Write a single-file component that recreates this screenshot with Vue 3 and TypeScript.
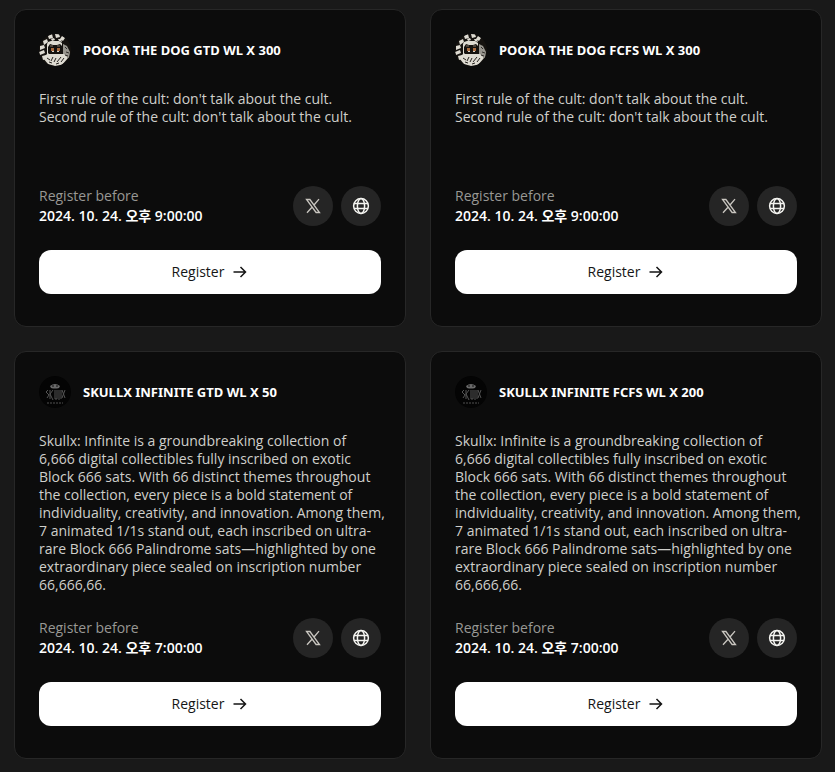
<script setup lang="ts">
interface Drop {
  title: string
  art: 'pooka' | 'skullx'
  description: string
  deadline: string
}

const pookaText =
  "First rule of the cult: don't talk about the cult.\nSecond rule of the cult: don't talk about the cult."
const skullxText = [
  'Skullx: Infinite is a groundbreaking collection of',
  '6,666 digital collectibles fully inscribed on exotic',
  'Block 666 sats. With 66 distinct themes throughout',
  'the collection, every piece is a bold statement of',
  'individuality, creativity, and innovation. Among them,',
  '7 animated 1/1s stand out, each inscribed on ultra-',
  'rare Block 666 Palindrome sats—highlighted by one',
  'extraordinary piece sealed on inscription number',
  '66,666,66.',
].join('\n')

const drops: Drop[] = [
  { title: 'POOKA THE DOG GTD WL X 300', art: 'pooka', description: pookaText, deadline: '2024. 10. 24. 오후 9:00:00' },
  { title: 'POOKA THE DOG FCFS WL X 300', art: 'pooka', description: pookaText, deadline: '2024. 10. 24. 오후 9:00:00' },
  { title: 'SKULLX INFINITE GTD WL X 50', art: 'skullx', description: skullxText, deadline: '2024. 10. 24. 오후 7:00:00' },
  { title: 'SKULLX INFINITE FCFS WL X 200', art: 'skullx', description: skullxText, deadline: '2024. 10. 24. 오후 7:00:00' },
]
</script>

<template>
  <main class="drops">
    <article v-for="drop in drops" :key="drop.title" class="card">
      <header class="head">
        <svg v-if="drop.art === 'pooka'" class="avatar" viewBox="0 0 32 32" aria-hidden="true">
          <rect width="32" height="32" fill="#15120f" />
          <g fill="#dedbd2">
            <path d="M9 2l4-2 1 4-4 1zM16 0h4l1 3-4 1zM23 2l3 2-2 3-3-2zM4 7l4-2 1 3-4 3zM1 12l4-1 1 3-5 2zM0 18l5-2 1 3-5 2zM3 22l4-1v4l-3 1zM12 5l3-1 1 2-3 1zM19 5h3l1 3-3-1z" />
            <path d="M9 8l3-1h8l3 2v3l-2-2-3 1h-4l-3-1-2 3v6l2 2h-3V10z" />
            <path d="M24 10l4 2 3 6-1 6-6-2z" opacity=".65" />
            <path d="M4 24l4-4h17l4 4-6 7-7 1-7-2z" />
          </g>
          <path d="M11 11h3v2h-3zM18 11h3v2h-3z" fill="#4c443c" />
          <path d="M12 14h3v3h-3zM18 14h3v3h-3z" fill="#a8693d" />
          <path d="M13 17h2v1h-2zM18 17h2v1h-2z" fill="#d8d2c6" />
          <path d="M8 24l3 2M14 23l-2 4M17 24l-2 4M22 23l-4 5M25 24l-3 4M10 28l3 1M17 30l3-1" stroke="#25211d" fill="none" />
          <path d="M26 13l2 2M27 18l3 1M26 21l3 1" stroke="#302d2a" fill="none" />
        </svg>
        <svg v-else class="avatar" viewBox="0 0 32 32" aria-hidden="true">
          <rect width="32" height="32" fill="#040404" />
          <path d="M11 10q5-4 10 0l-1 2q-4 1-8 0z" fill="#6a6a6a" />
          <path d="M13 10h2M17 10h2" stroke="#111" fill="none" />
          <path d="M9 14l-2 2 3 3-2 3M11 14v9M14 14l-3 4 3 6M16 14v9h2v-9M20 14v10M22 14v9M23 14l3 8M26 14l-3 8" fill="none" stroke="#545454" />
          <path d="M8 27h16" stroke="#505050" stroke-dasharray="2 1" fill="none" />
        </svg>
        <h2 class="title">{{ drop.title }}</h2>
      </header>

      <p class="description">{{ drop.description }}</p>

      <div class="meta">
        <div class="deadline">
          <span class="label">Register before</span>
          <time class="date">{{ drop.deadline }}</time>
        </div>
        <nav class="links">
          <a class="link" href="#" aria-label="X">
            <svg width="16" height="16" viewBox="0 0 16 16" fill="none" stroke="#c9c6c0" stroke-width="1.3" aria-hidden="true">
              <path d="M1.5 1.5h3.4l9.6 13h-3.4zM14 1.2L9 7M7 9.2L2 14.8" />
            </svg>
          </a>
          <a class="link" href="#" aria-label="Website">
            <svg width="18" height="18" viewBox="0 0 18 18" fill="none" stroke="#f4f4f0" stroke-width="1.5" aria-hidden="true">
              <circle cx="9" cy="9" r="7.4" />
              <ellipse cx="9" cy="9" rx="3.6" ry="7.4" />
              <path d="M2 6.4h14M2 11.6h14" />
            </svg>
          </a>
        </nav>
      </div>

      <button class="register" type="button">
        Register
        <svg width="16" height="16" viewBox="0 0 16 16" fill="none" stroke="currentColor" stroke-width="1.5" aria-hidden="true">
          <path d="M1.5 8h12M8.500 3l5 5-5 5" />
        </svg>
      </button>
    </article>
  </main>
</template>

<style>
body {
  background: #191919;
}
</style>

<style scoped>
.drops {
  display: grid;
  grid-template-columns: repeat(2, minmax(0, 1fr));
  gap: 24px;
  padding: 9px 13px 13px 14px;
  font-family: "Open Sans", "Noto Sans CJK KR", sans-serif;
  font-size: 14px;
  line-height: 18px;
  color: #fff;
}

.card {
  display: flex;
  flex-direction: column;
  gap: 24px;
  padding: 24px 24px 32px;
  border: 1px solid #272727;
  border-radius: 12px;
  background: #0c0c0c;
}

.head {
  display: flex;
  align-items: center;
  gap: 12px;
}

.avatar {
  width: 32px;
  height: 32px;
  border-radius: 50%;
}

.title {
  margin: 0;
  font-family: "Noto Sans", sans-serif;
  font-size: 13px;
  font-weight: 700;
}

.description {
  flex: 1;
  min-height: 72px;
  margin: 0;
  color: #cfcfcb;
  white-space: pre;
}

.meta {
  display: flex;
  align-items: center;
  justify-content: space-between;
}

.deadline {
  display: flex;
  flex-direction: column;
  line-height: 20px;
}

.label {
  color: #989894;
}

.date {
  font-weight: 600;
}

.links {
  display: flex;
  gap: 8px;
}

.link {
  display: flex;
  align-items: center;
  justify-content: center;
  width: 40px;
  height: 40px;
  border-radius: 50%;
  background: #252525;
}

.register {
  display: flex;
  align-items: center;
  justify-content: center;
  gap: 8px;
  height: 44px;
  border: 0;
  border-radius: 12px;
  background: #fff;
  color: #151515;
  font: inherit;
  cursor: pointer;
}
</style>
